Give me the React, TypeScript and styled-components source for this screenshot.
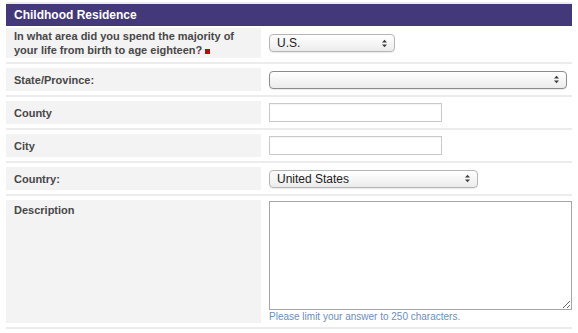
import React from "react";
import styled, { createGlobalStyle } from "styled-components";

const GlobalStyle = createGlobalStyle`
  body {
    margin: 0;
    background: #ffffff;
    font-family: "Liberation Sans", Arial, sans-serif;
  }
`;

const Section = styled.section`
  width: 566px;
  margin: 2px 0 0 6px;
  border-top: 2px solid #ececec;
`;

const SectionTitle = styled.h2`
  margin: 0;
  height: 22px;
  display: flex;
  align-items: center;
  padding: 0 8px;
  background: #433879;
  color: #ffffff;
  font-size: 12px;
  font-weight: bold;
`;

const Row = styled.div<{ $first?: boolean }>`
  display: flex;
  padding: ${({ $first }) => ($first ? "2px 0 4px" : "4px 0")};
  border-bottom: 2px solid #ececec;
`;

const Label = styled.div<{ $top?: boolean }>`
  width: 255px;
  flex: none;
  box-sizing: border-box;
  min-height: 23px;
  padding: ${({ $top }) => ($top ? "3px 8px" : "1px 8px")};
  background: #f3f3f3;
  display: flex;
  align-items: ${({ $top }) => ($top ? "flex-start" : "center")};
  color: #474747;
  font-size: 11px;
  font-weight: bold;
  line-height: 14px;
`;

const Required = styled.span`
  display: inline-block;
  width: 5px;
  height: 5px;
  margin-left: 3px;
  background: #b50d0d;
  vertical-align: 0;
`;

const Field = styled.div<{ $top?: boolean }>`
  flex: 1;
  padding: ${({ $top }) => ($top ? "1px 0 0 8px" : "0 0 0 8px")};
  display: flex;
  flex-direction: column;
  justify-content: ${({ $top }) => ($top ? "flex-start" : "center")};
  align-items: flex-start;
`;

const Select = styled.div<{ $width: number; $focus?: boolean }>`
  width: ${({ $width }) => $width}px;
  height: 18px;
  box-sizing: border-box;
  display: flex;
  align-items: center;
  justify-content: space-between;
  padding: 0 6px 0 7px;
  border: 1px solid ${({ $focus }) => ($focus ? "#8c8c8c" : "#b6b6b6")};
  border-radius: 4px;
  background: linear-gradient(#ffffff, #ececec);
  box-shadow: 0 1px 1px rgba(0, 0, 0, 0.08);
  font-size: 12px;
  color: #222222;
`;

const TextInput = styled.input`
  width: 173px;
  height: 19px;
  box-sizing: border-box;
  margin: 0;
  border: 1px solid #c9c9c9;
  border-radius: 0;
  box-shadow: inset 0 1px 1px rgba(0, 0, 0, 0.05);
  font: 12px "Liberation Sans", Arial, sans-serif;
  outline: none;
`;

const TextArea = styled.textarea`
  width: 303px;
  height: 109px;
  box-sizing: border-box;
  margin: 0;
  border: 1px solid #a6a6a6;
  border-radius: 0;
  resize: both;
  font: 12px "Liberation Sans", Arial, sans-serif;
  outline: none;
`;

const Help = styled.div`
  color: #6b8ebf;
  font-size: 10px;
  line-height: 13px;
`;

const Arrows = () => (
  <svg width="7" height="9" viewBox="0 0 7 9">
    <polygon points="1,3.6 3.5,0.8 6,3.6" fill="#3c3c3c" />
    <polygon points="1,5.4 3.5,8.2 6,5.4" fill="#3c3c3c" />
  </svg>
);

const SelectBox = ({ value, width, focus }: { value: string; width: number; focus?: boolean }) => (
  <Select $width={width} $focus={focus}>
    <span>{value}</span>
    <Arrows />
  </Select>
);

const App = () => {
  return (
    <>
      <GlobalStyle />
      <Section>
        <SectionTitle>Childhood Residence</SectionTitle>
        <Row $first>
          <Label>
            <span>
              In what area did you spend the majority of your life from birth to age eighteen?
              <Required />
            </span>
          </Label>
          <Field>
            <SelectBox value="U.S." width={126} />
          </Field>
        </Row>
        <Row>
          <Label>
            <span>State/Province:</span>
          </Label>
          <Field>
            <SelectBox value="" width={298} focus />
          </Field>
        </Row>
        <Row>
          <Label>
            <span>County</span>
          </Label>
          <Field>
            <TextInput type="text" />
          </Field>
        </Row>
        <Row>
          <Label>
            <span>City</span>
          </Label>
          <Field>
            <TextInput type="text" />
          </Field>
        </Row>
        <Row>
          <Label>
            <span>Country:</span>
          </Label>
          <Field>
            <SelectBox value="United States" width={209} />
          </Field>
        </Row>
        <Row>
          <Label $top>
            <span>Description</span>
          </Label>
          <Field $top>
            <TextArea />
            <Help>Please limit your answer to 250 characters.</Help>
          </Field>
        </Row>
      </Section>
    </>
  );
};

export default App;
